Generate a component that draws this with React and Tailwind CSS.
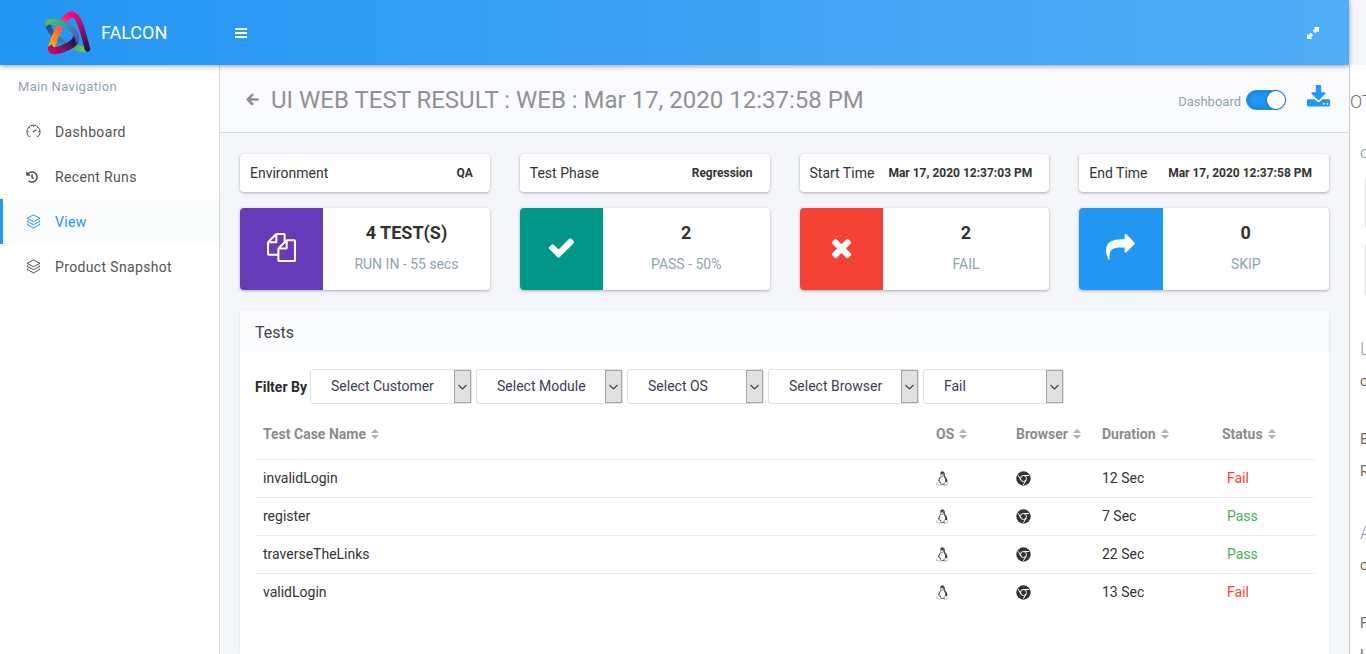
import { TfiLinux } from "react-icons/tfi";
import { FaHistory } from "react-icons/fa";

const PATHS = {
  files:
    "M1696 384q40 0 68 28t28 68v1216q0 40-28 68t-68 28h-960q-40 0-68-28t-28-68v-288h-544q-40 0-68-28t-28-68v-672q0-40 20-88t48-76l408-408q28-28 76-48t88-20h416q40 0 68 28t28 68v328q68-40 128-40h416zm-544 213l-299 299h299v-299zm-640-384l-299 299h299v-299zm196 647l316-316v-416h-384v416q0 40-28 68t-68 28h-416v640h512v-256q0-40 20-88t48-76zm956 804v-1152h-384v416q0 40-28 68t-68 28h-416v640h896z",
  check:
    "M1671 566q0 40-28 68l-724 724-136 136q-28 28-68 28t-68-28l-136-136-362-362q-28-28-28-68t28-68l136-136q28-28 68-28t68 28l294 295 656-657q28-28 68-28t68 28l136 136q28 28 28 68z",
  times:
    "M1490 1322q0 40-28 68l-136 136q-28 28-68 28t-68-28l-294-294-294 294q-28 28-68 28t-68-28l-136-136q-28-28-28-68t28-68l294-294-294-294q-28-28-28-68t28-68l136-136q28-28 68-28t68 28l294 294 294-294q28-28 68-28t68 28l136 136q28 28 28 68t-28 68l-294 294 294 294q28 28 28 68z",
  share:
    "M1792 640q0 26-19 45l-512 512q-19 19-45 19t-45-19-19-45v-256h-224q-98 0-175.5 6t-154 21.5-133 42.5-105.5 69.5-80 101-48.5 138.5-17.5 181q0 55 5 123 0 6 2.5 23.5t2.5 26.5q0 15-8.5 25t-23.5 10q-16 0-28-17-7-9-13-22t-13.5-30-10.5-24q-127-285-127-451 0-199 53-333 162-403 875-403h224v-256q0-26 19-45t45-19 45 19l512 512q19 19 19 45z",
  download:
    "M1344 1344q0-26-19-45t-45-19-45 19-19 45 19 45 45 19 45-19 19-45zm256 0q0-26-19-45t-45-19-45 19-19 45 19 45 45 19 45-19 19-45zm128-224v320q0 40-28 68t-68 28h-1472q-40 0-68-28t-28-68v-320q0-40 28-68t68-28h465l135 136q58 56 136 56t136-56l136-136h464q40 0 68 28t28 68zm-325-569q17 41-14 70l-448 448q-18 19-45 19t-45-19l-448-448q-31-29-14-70 17-39 59-39h256v-448q0-26 19-45t45-19h256q26 0 45 19t19 45v448h256q42 0 59 39z",
};

function Glyph({ name, className }) {
  return (
    <svg viewBox="0 0 1792 1792" className={className} fill="currentColor" aria-hidden="true">
      <path d={PATHS[name]} />
    </svg>
  );
}

function Logo() {
  return (
    <svg viewBox="0 0 46 44" className="h-11 w-[46px]" fill="none" strokeLinecap="round" aria-hidden="true">
      <defs>
        <linearGradient id="pink" x1="26" y1="2" x2="6" y2="36" gradientUnits="userSpaceOnUse">
          <stop offset="0" stopColor="#f5057f" />
          <stop offset=".4" stopColor="#ff4a55" />
          <stop offset="1" stopColor="#fdb400" />
        </linearGradient>
        <linearGradient id="plum" x1="28" y1="3" x2="43" y2="40" gradientUnits="userSpaceOnUse">
          <stop offset="0" stopColor="#f5057f" />
          <stop offset=".45" stopColor="#8c1567" />
          <stop offset="1" stopColor="#1b1340" />
        </linearGradient>
        <linearGradient id="sea" x1="2" y1="10" x2="33" y2="27" gradientUnits="userSpaceOnUse">
          <stop offset="0" stopColor="#63bb55" />
          <stop offset=".5" stopColor="#2f9fae" />
          <stop offset="1" stopColor="#5a55b0" />
        </linearGradient>
        <linearGradient id="lime" x1="2" y1="14" x2="40" y2="40" gradientUnits="userSpaceOnUse">
          <stop offset="0" stopColor="#28447f" />
          <stop offset=".45" stopColor="#2a83b8" />
          <stop offset=".75" stopColor="#4bb070" />
          <stop offset="1" stopColor="#7ac943" />
        </linearGradient>
        <linearGradient id="wine" x1="4" y1="40" x2="33" y2="24" gradientUnits="userSpaceOnUse">
          <stop offset="0" stopColor="#d8055f" />
          <stop offset=".45" stopColor="#7a1263" />
          <stop offset=".8" stopColor="#1d1747" />
          <stop offset="1" stopColor="#5a4fb0" />
        </linearGradient>
      </defs>
      <path d="M3 14C6 24 18 35 40 38.500" stroke="url(#lime)" strokeWidth="5.500" />
      <path d="M6.500 36C10 25 18 5 27 3.500" stroke="url(#pink)" strokeWidth="6.500" />
      <path d="M27 3.500C34 2 39 25 42.500 38" stroke="url(#plum)" strokeWidth="5.500" />
      <path d="M3 36C2 46 14 44 24 39C33 35 35 30 34 24L29 22C29 28 24 31 17 34C12 36 7 38 7 33Z" fill="url(#wine)" />
      <path d="M1 16C-2 10 4 7 11 8C22 10 35 17 34 27C33 33 30 32 31 29C29 21 18 15 9 14C4 13 2 14 1 16Z" fill="url(#sea)" />
    </svg>
  );
}

function BarsIcon() {
  return (
    <svg viewBox="0 0 12 10" className="h-[10px] w-3" aria-hidden="true">
      <path fill="currentColor" d="M0 0H12V2H0ZM0 4H12V6H0ZM0 8H12V10H0Z" />
    </svg>
  );
}

function BackIcon() {
  return (
    <svg viewBox="0 0 13 13" className="size-[13px]" fill="none" stroke="currentColor" aria-hidden="true">
      <path d="M7 1.200L1.800 6.500L7 11.800M2 6.500H12.500" strokeWidth="2.600" />
    </svg>
  );
}

function ExpandIcon() {
  return (
    <svg viewBox="0 0 12 12" className="size-3" aria-hidden="true">
      <path
        fill="currentColor"
        d="M6.800 0H12V5.200L10.500 3.900L8.200 6.200L5.800 3.800L8.100 1.500ZM5.200 12H0V6.800L1.500 8.100L3.800 5.800L6.200 8.200L3.900 10.500Z"
      />
      <path stroke="#51adf6" strokeWidth=".7" d="M4.300 4.300L7.700 7.700" />
    </svg>
  );
}

function GaugeIcon() {
  return (
    <svg viewBox="0 0 15 15" className="size-[15px]" fill="none" stroke="currentColor" aria-hidden="true">
      <path d="M3.500 13A6.600 6.600 0 1 1 11.500 13" />
      <path d="M6.800 8L10.500 5.700" strokeWidth="1.300" />
      <path d="M7.500 1V3M3 3L4 4.200M12 3L11 4.200M1 7.700H2.800M12.200 7.700H14M3.500 13L4.400 11.500M11.500 13L10.600 11.500" strokeWidth=".8" />
    </svg>
  );
}

function LayersIcon() {
  return (
    <svg viewBox="0 0 15 15" className="size-[15px]" fill="none" stroke="currentColor" aria-hidden="true">
      <path d="M7.500 .9L14 4.300L7.500 7.700L1 4.300Z" />
      <path d="M2.300 6.600L1 7.300L7.500 10.700L14 7.300L12.700 6.600M2.300 9.700L1 10.400L7.500 13.900L14 10.400L12.700 9.700" />
    </svg>
  );
}

function ChromeIcon() {
  return (
    <svg viewBox="0 0 15 15" className="size-[15px]" role="img" aria-label="Chrome">
      <circle cx="7.500" cy="7.500" r="7.200" fill="#333" />
      <g fill="none" stroke="#fff" strokeWidth="1">
        <circle cx="7.500" cy="7.500" r="3" />
        <path d="M7.500 4.500H13M4.900 9L2.200 4.200M10.100 9L7.300 13.900" />
      </g>
    </svg>
  );
}

function SortIcon() {
  return (
    <svg viewBox="0 0 8 10" className="h-[10px] w-2 text-[#b0b0b0]" aria-hidden="true">
      <path fill="currentColor" d="M4 0L8 4H0ZM4 10L0 6H8Z" />
    </svg>
  );
}

const NAV = [
  { label: "Dashboard", icon: <GaugeIcon /> },
  { label: "Recent Runs", icon: <FaHistory className="size-3" /> },
  { label: "View", icon: <LayersIcon />, active: true },
  { label: "Product Snapshot", icon: <LayersIcon /> },
];

const FACTS = [
  ["Environment", "QA"],
  ["Test Phase", "Regression"],
  ["Start Time", "Mar 17, 2020 12:37:03 PM"],
  ["End Time", "Mar 17, 2020 12:37:58 PM"],
];

const STATS = [
  { value: "4 TEST(S)", note: "RUN IN - 55 secs", icon: "files", color: "bg-[#673ab7]" },
  { value: "2", note: "PASS - 50%", icon: "check", color: "bg-[#009688]" },
  { value: "2", note: "FAIL", icon: "times", color: "bg-[#f44336]" },
  { value: "0", note: "SKIP", icon: "share", color: "bg-[#2196f3]" },
];

const FILTERS = [
  { label: "Customer", text: "Select Customer", width: "w-[162px]" },
  { label: "Module", text: "Select Module", width: "w-[147px]" },
  { label: "OS", text: "Select OS", width: "w-[137px]" },
  { label: "Browser", text: "Select Browser", width: "w-[151px]" },
  { label: "Status", text: "Fail", width: "w-[141px]" },
];

const COLUMNS = [
  { label: "Test Case Name", width: "" },
  { label: "OS", width: "w-[80px]" },
  { label: "Browser", width: "w-[86px]" },
  { label: "Duration", width: "w-[120px]" },
  { label: "Status", width: "w-[100px]" },
];

const ROWS = [
  ["invalidLogin", "12 Sec", "Fail"],
  ["register", "7 Sec", "Pass"],
  ["traverseTheLinks", "22 Sec", "Pass"],
  ["validLogin", "13 Sec", "Fail"],
];

const CARD = "rounded bg-white shadow-[0_1px_3px_rgba(0,0,0,0.3)]";

function Header() {
  return (
    <header className="relative z-10 flex h-[65px] items-center bg-linear-to-r from-[#2196f3] to-[#51adf6] text-white shadow-[0_1px_5px_rgba(0,0,0,0.4)]">
      <a href="#home" className="flex w-[220px] items-center gap-[10px] pl-[45px] text-lg">
        <Logo />
        FALCON
      </a>
      <button type="button" aria-label="Toggle menu" className="ml-[15px]">
        <BarsIcon />
      </button>
      <button type="button" aria-label="Full screen" className="mr-[30px] ml-auto">
        <ExpandIcon />
      </button>
    </header>
  );
}

function Sidebar() {
  return (
    <nav className="w-[220px] shrink-0 border-r border-[#d3d6d8] bg-white" aria-label="Main Navigation">
      <p className="px-[18px] py-3 text-[13px] leading-5 tracking-wide text-[#90a4ae]">Main Navigation</p>
      {NAV.map((item) => (
        <a
          key={item.label}
          href="#nav"
          className={
            item.active
              ? "flex h-[45px] items-center border-l-3 border-[#2196f3] bg-[#fbfcfc] pl-[23px] text-sm tracking-wide text-[#2196f3]"
              : "flex h-[45px] items-center border-l-3 border-transparent pl-[23px] text-sm tracking-wide text-[#545454]"
          }
        >
          <span className="flex w-[29px]">{item.icon}</span>
          {item.label}
        </a>
      ))}
    </nav>
  );
}

function TitleBar() {
  return (
    <div className="flex h-[68px] items-center border-b border-[#cfdde5] bg-[#fafbfe] pt-0.5 pr-[18px] pl-[26px]">
      <a href="#back" aria-label="Back" className="mr-3 text-[#8f8f8f]">
        <BackIcon />
      </a>
      <h1 className="text-2xl text-[#919191]">UI WEB TEST RESULT : WEB : Mar 17, 2020 12:37:58 PM</h1>
      <label className="ml-auto flex items-center gap-[5px] text-[13px] text-[#90a4ae]">
        <span className="pt-1">Dashboard</span>
        <input type="checkbox" defaultChecked className="peer sr-only" />
        <span className="flex h-5 w-10 justify-end rounded-full border border-[#2196f3] bg-[#2196f3] shadow-[inset_0_0_5px_rgba(0,0,0,0.25)]">
          <span className="size-[18px] rounded-full bg-white shadow-[0_0_3px_rgba(0,0,0,0.5)]" />
        </span>
      </label>
      <button type="button" aria-label="Download report" className="-mt-1 ml-5 text-[#2196f3]">
        <Glyph name="download" className="size-[25px]" />
      </button>
    </div>
  );
}

function Results() {
  return (
    <table className="mt-[10px] w-full table-fixed text-sm text-[#333]">
      <thead>
        <tr className="h-[45px] text-left text-[#8b8b8b]">
          {COLUMNS.map((c) => (
            <th key={c.label} scope="col" className={`${c.width} px-2 pb-1 font-bold`}>
              <button type="button" className="flex items-center gap-[5px] whitespace-nowrap">
                {c.label}
                <SortIcon />
              </button>
            </th>
          ))}
        </tr>
      </thead>
      <tbody>
        {ROWS.map(([name, duration, status]) => (
          <tr key={name} className="h-[38px] border-t border-[#e9ecef]">
            <td className="px-2">{name}</td>
            <td className="px-2">
              <TfiLinux className="-ml-px size-[15px]" role="img" aria-label="Linux" />
            </td>
            <td className="px-2">
              <ChromeIcon />
            </td>
            <td className="px-2">{duration}</td>
            <td className={status === "Fail" ? "pl-[13px] text-[#f44336]" : "pl-[13px] text-[#4caf50]"}>{status}</td>
          </tr>
        ))}
      </tbody>
    </table>
  );
}

function Filters() {
  return (
    <div className="flex items-center gap-1">
      <span className="mr-[-1px] text-sm font-bold text-[#2b2b2b]">Filter By</span>
      {FILTERS.map((f) => (
        <div key={f.label} className={`${f.width} relative flex h-[35px] shrink-0 rounded-[3px] border border-[#d9e4e6] bg-white`}>
          <select aria-label={f.label} className="w-full appearance-none bg-transparent pb-0.5 pl-5 text-sm text-[#3d3d56]">
            <option>{f.text}</option>
          </select>
          <span className="pointer-events-none absolute inset-y-0 right-0 flex w-[17px] items-center justify-center border border-[#a6a6a6] bg-[#e1e1e1]">
            <svg viewBox="0 0 9 6" className="h-[6px] w-[9px]" fill="none" stroke="#444" strokeWidth="1.200" aria-hidden="true">
              <path d="M0.500 1L4.500 5L8.500 1" />
            </svg>
          </span>
        </div>
      ))}
    </div>
  );
}

function SidePanel() {
  return (
    <aside className="w-[17px] shrink-0 overflow-hidden whitespace-nowrap bg-[#f5f6fa] pt-[65px]" aria-label="Settings">
      <div className="h-full border-l border-[#c9cccd] bg-white text-sm text-[#6b6b6b]">
        <p className="pt-[23px] text-lg leading-7 font-light">OT</p>
        <p className="pt-[28px] pl-[10px] text-[13px] leading-5 text-[#90a4ae]">C</p>
        <div className="mt-3 ml-[15px] h-[54px] w-10 rounded-sm border border-[#ddd] bg-[#f1f1f1]" />
        <div className="mt-3 ml-[15px] h-[56px] w-10 rounded-sm border border-[#ddd] bg-[#f1f1f1]" />
        <div className="pl-[10px] leading-5">
          <p className="pt-[41px] text-lg leading-5 font-light text-[#90a4ae]">L</p>
          <p className="pt-3">o</p>
          <p className="pt-[38px]">B</p>
          <p className="pt-3">R</p>
          <p className="pt-[42px] text-lg leading-5 font-light text-[#90a4ae]">A</p>
          <p className="pt-3">o</p>
          <p className="pt-[38px]">F</p>
          <p className="pt-3">H</p>
        </div>
      </div>
    </aside>
  );
}

export default function App() {
  return (
    <div className="flex h-screen overflow-hidden bg-[#f5f6fa] font-['Roboto',sans-serif] text-[#333]">
      <div className="flex min-w-0 flex-1 flex-col">
        <Header />
        <div className="flex min-h-0 flex-1">
          <Sidebar />
          <main className="flex min-w-0 flex-1 flex-col">
            <TitleBar />
            <div className="flex min-h-0 flex-1 flex-col px-5 pt-[21px]">
              <div className="grid grid-cols-4 gap-x-[30px] gap-y-4">
                {FACTS.map(([label, value]) => (
                  <div key={label} className={`${CARD} flex h-[38px] items-center justify-between pr-[17px] pl-[10px] text-sm whitespace-nowrap`}>
                    {label}
                    <strong className="text-xs font-bold">{value}</strong>
                  </div>
                ))}
                {STATS.map((s) => (
                  <div key={s.note} className={`${CARD} flex h-[82px] overflow-hidden`}>
                    <div className={`${s.color} flex w-1/3 items-center justify-center pb-[3px] text-white`}>
                      <Glyph name={s.icon} className="size-[29px]" />
                    </div>
                    <div className="flex flex-1 flex-col items-center pt-[13px]">
                      <strong className="text-lg leading-6 font-bold">{s.value}</strong>
                      <span className="mt-[9px] text-sm text-[#90a4ae]">{s.note}</span>
                    </div>
                  </div>
                ))}
              </div>
              <section className="mt-5 flex-1 rounded-t bg-white shadow-[0_0_3px_rgba(0,0,0,0.1)]">
                <h2 className="flex h-[43px] items-center rounded-t bg-[#fafbfd] px-[15px] pt-0.5 text-base text-[#444]">Tests</h2>
                <div className="px-[15px] pt-4">
                  <Filters />
                  <Results />
                </div>
              </section>
            </div>
          </main>
        </div>
      </div>
      <SidePanel />
    </div>
  );
}
